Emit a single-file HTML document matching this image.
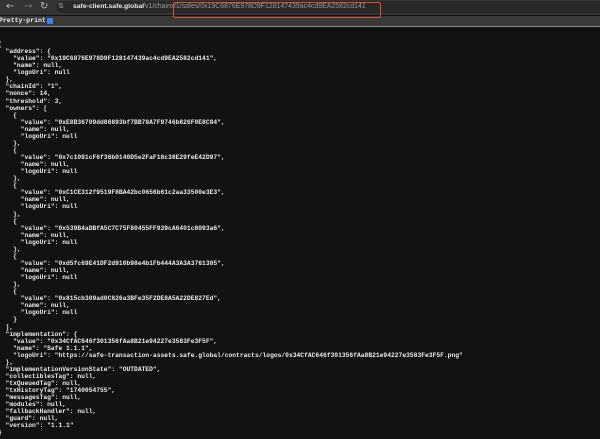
<!DOCTYPE html>
<html><head><meta charset="utf-8"><style>
html,body{margin:0;padding:0;width:600px;height:439px;overflow:hidden;background:#121212;}
.tb{position:absolute;left:0;top:0;width:600px;height:15px;background:#343434;}
.pill{position:absolute;left:56px;top:1px;width:560px;height:12px;background:#282828;border-radius:6px;}
.url{position:absolute;top:1px;font:bold 6.8px "Liberation Sans",sans-serif;color:#e8e8e8;line-height:12px;white-space:pre;}
.red{position:absolute;left:173px;top:2px;width:208px;height:16px;border:1.5px solid #d9502a;border-radius:2px;box-sizing:border-box;z-index:3}
.nav{position:absolute;top:1px;font:10px "DejaVu Sans",sans-serif;color:#bbb;line-height:12px}
.pp{position:absolute;left:0;top:16px;width:600px;height:10px;background:#3a3a3a;border-bottom:1px solid #8a8a8a;}
.pp span{position:absolute;left:-1px;top:0;font:bold 6.5px "Liberation Mono",monospace;color:#eee;line-height:10px}
.cb{position:absolute;left:47px;top:2px;width:6px;height:6px;background:#3b82f6;border-radius:1px}
pre{position:absolute;left:-2px;top:41px;margin:0;font:bold 6.3px/7.07px "Liberation Mono",monospace;color:#ececec;}
</style></head><body>
<div class="tb"><div class="nav" style="left:6px">←</div><div class="nav" style="left:24px;color:#777">→</div><div class="nav" style="left:40px">↻</div>
<div class="pill"></div><div class="url" style="left:58px;color:#aaa;font-weight:normal">⇅</div>
<div class="url" style="left:73px">safe-client.safe.global</div>
<div class="url" style="left:143px;color:#9a9a9a;font-weight:normal;font-size:7px">/v1/chains</div>
<div class="url" style="left:174px;color:#9a9a9a;font-weight:normal;font-size:6.95px">/1/safes/0x19C6876E978D9F128147439ac4cd9EA2582cd141</div>
</div>
<div class="red"></div>
<div class="pp"><span>Pretty-print</span><div class="cb"></div></div>
<pre>{
  "address": {
    "value": "0x19C6876E978D9F128147439ac4cd9EA2582cd141",
    "name": null,
    "logoUri": null
  },
  "chainId": "1",
  "nonce": 14,
  "threshold": 3,
  "owners": [
    {
      "value": "0xE8B36709dd86893bf7BB78A7F9746b826F0E8C84",
      "name": null,
      "logoUri": null
    },
    {
      "value": "0x7c1091cF6f36b0140D5e2FaF18c38E29feE42D97",
      "name": null,
      "logoUri": null
    },
    {
      "value": "0xC1CE312f9519F8BA42bc0656b61c2aa33500e3E3",
      "name": null,
      "logoUri": null
    },
    {
      "value": "0x539B4aDBfA5C7C75F80455FF939cA6401c8093a6",
      "name": null,
      "logoUri": null
    },
    {
      "value": "0xd5fc69E41DF2d910b98e4b1Fb444A3A3A3761385",
      "name": null,
      "logoUri": null
    },
    {
      "value": "0x815cb309ad0C826a3BFe35F2DE8A5A22DE827Ed",
      "name": null,
      "logoUri": null
    }
  ],
  "implementation": {
    "value": "0x34CfAC646f301356fAa8B21e94227e3583Fe3F5F",
    "name": "Safe 1.1.1",
    "logoUri": "https://safe-transaction-assets.safe.global/contracts/logos/0x34CfAC646f301356fAa8B21e94227e3583Fe3F5F.png"
  },
  "implementationVersionState": "OUTDATED",
  "collectiblesTag": null,
  "txQueuedTag": null,
  "txHistoryTag": "1740054755",
  "messagesTag": null,
  "modules": null,
  "fallbackHandler": null,
  "guard": null,
  "version": "1.1.1"
}</pre>
</body></html>
